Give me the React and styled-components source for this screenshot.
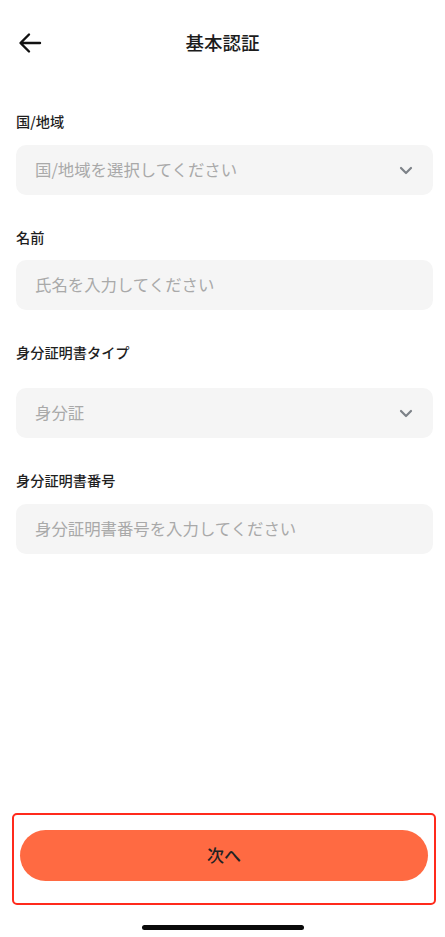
import React from 'react';
import styled, { createGlobalStyle } from 'styled-components';

const GlobalStyle = createGlobalStyle`
  body {
    margin: 0;
    background: #fff;
    font-family: "Noto Sans CJK JP", "Noto Sans", sans-serif;
  }
`

const Page = styled.div`
  width: 445px;
  height: 937px;
  display: flex;
  flex-direction: column;
  background: #fff;
`

const Header = styled.div`
  height: 86px;
  padding-bottom: 2px;
  box-sizing: border-box;
  display: flex;
  align-items: center;
  justify-content: center;
  position: relative;
`

const BackButton = styled.div`
  position: absolute;
  left: 17px;
  top: 31px;
  width: 26px;
  height: 24px;
  display: flex;
  align-items: center;
  justify-content: center;
`

const Title = styled.h1`
  margin: 0;
  font-size: 18.5px;
  font-weight: 500;
  color: #1c1c1c;
`

const Form = styled.div`
  padding: 27px 12px 0 16px;
  display: flex;
  flex-direction: column;
  gap: 34px;
`

const Field = styled.div`
  display: flex;
  flex-direction: column;
  gap: ${p => p.$gap || 16}px;
`

const Label = styled.div`
  font-size: 14.2px;
  line-height: 16px;
  font-weight: 500;
  color: #1f1f1f;
`

const InputBox = styled.div`
  height: 50px;
  border-radius: 10px;
  background: #f5f5f5;
  display: flex;
  align-items: center;
  justify-content: space-between;
  padding: 0 20px 0 19px;
`

const Placeholder = styled.span`
  font-size: 16.4px;
  line-height: 22px;
  padding-bottom: 3px;
  color: #a9a9a9;
`

const Spacer = styled.div`
  flex: 1;
`

const Footer = styled.div`
  margin: 0 9px 0 12px;
  border: 2px solid #ff2a1c;
  border-radius: 5px;
  padding: 15px 6px 22px 6px;
`

const NextButton = styled.button`
  width: 100%;
  height: 51px;
  border: none;
  border-radius: 26px;
  background: #ff6a42;
  color: #222;
  font-family: inherit;
  font-size: 17px;
  font-weight: 500;
  padding: 0 0 2px;
`

const HomeBar = styled.div`
  width: 162px;
  height: 5px;
  border-radius: 3px;
  background: #0a0a0a;
  margin: 20px auto 7px;
`

const Chevron = () => (
  <svg width="14" height="9" viewBox="0 0 14 9">
    <path d="M2 2 L7 7 L12 2" fill="none" stroke="#7d8288" strokeWidth="2.2" strokeLinecap="round" strokeLinejoin="round" />
  </svg>
)

const ArrowLeft = () => (
  <svg width="24" height="22" viewBox="0 0 24 22">
    <path d="M22 11 H3 M11 2.5 L2.5 11 L11 19.5" fill="none" stroke="#111" strokeWidth="2.4" strokeLinecap="round" strokeLinejoin="round" />
  </svg>
)

const fields = [
  { label: '国/地域', placeholder: '国/地域を選択してください', select: true },
  { label: '名前', placeholder: '氏名を入力してください', gap: 15 },
  { label: '身分証明書タイプ', placeholder: '身分証', select: true, gap: 28 },
  { label: '身分証明書番号', placeholder: '身分証明書番号を入力してください' },
]

export default function App() {
  return (
    <Page>
      <GlobalStyle />
      <Header>
        <BackButton><ArrowLeft /></BackButton>
        <Title>基本認証</Title>
      </Header>
      <Form>
        {fields.map(f => (
          <Field key={f.label} $gap={f.gap}>
            <Label>{f.label}</Label>
            <InputBox>
              <Placeholder>{f.placeholder}</Placeholder>
              {f.select && <Chevron />}
            </InputBox>
          </Field>
        ))}
      </Form>
      <Spacer />
      <Footer>
        <NextButton>次へ</NextButton>
      </Footer>
      <HomeBar />
    </Page>
  )
}
